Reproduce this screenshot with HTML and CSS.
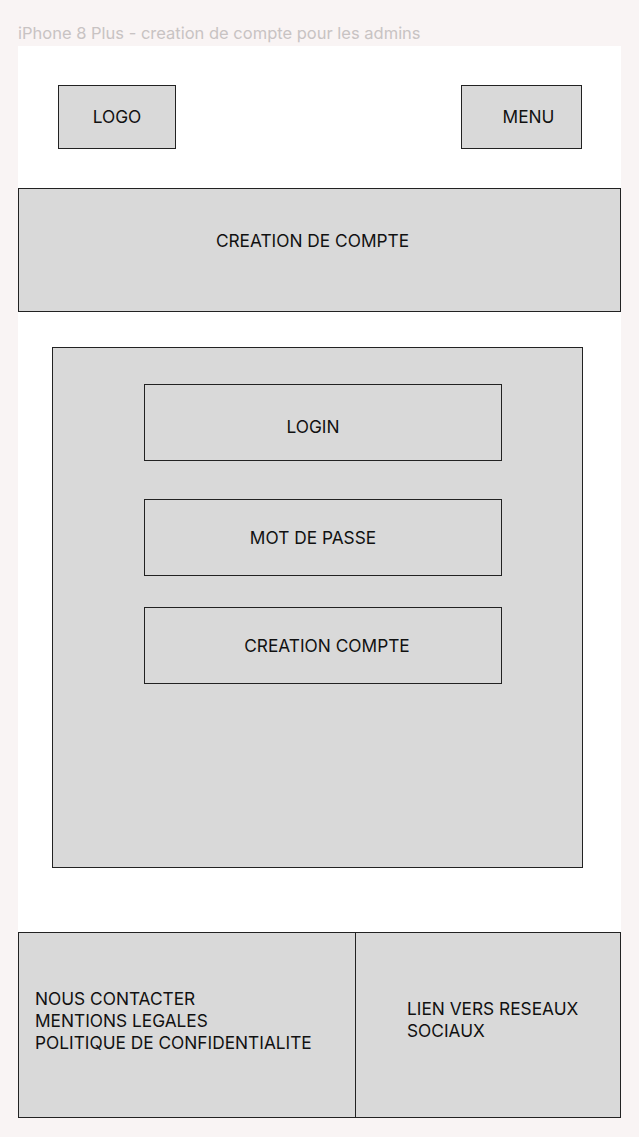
FILE: index.html
```html
<!DOCTYPE html>
<html lang="fr">
<head>
    <meta charset="UTF-8">
    <meta name="viewport" content="width=device-width, initial-scale=1.0">
    <title>creation de compte pour les admins</title>
    <link rel="stylesheet" href="styles.css">
</head>
<body>

    <div class="frame-label">iPhone 8 Plus - creation de compte pour les admins</div>

    <div class="frame">
        <div class="top-bar">
            <div class="box logo">LOGO</div>
            <div class="box menu">MENU</div>
        </div>

        <div class="box banner">CREATION DE COMPTE</div>

        <div class="box card">
            <div class="box field field-login">LOGIN</div>
            <div class="box field field-password">MOT DE PASSE</div>
            <div class="box field field-submit">CREATION COMPTE</div>
        </div>

        <div class="box footer">
            <div class="footer-links">
                NOUS CONTACTER<br>
                MENTIONS LEGALES<br>
                POLITIQUE DE CONFIDENTIALITE
            </div>
            <div class="footer-social">
                LIEN VERS RESEAUX<br>
                SOCIAUX
            </div>
        </div>
    </div>

</body>
</html>
```

FILE: styles.css
```css
body {
    margin: 0;
    padding: 0 18px;
    background-color: #f9f4f4;
    font-family: Inter, "Noto Sans", sans-serif;
    color: #111;
}

.frame-label {
    padding-top: 23px;
    margin-bottom: 3px;
    font-size: 16.5px;
    line-height: 20px;
    color: #c8c3c3;
}

.frame {
    width: 603px;
    height: 1072px;
    background-color: #fff;
    display: flex;
    flex-direction: column;
}

.box {
    box-sizing: border-box;
    background-color: #d9d9d9;
    border: 1px solid #222;
    font-size: 17.3px;
    line-height: 22px;
}

.top-bar {
    display: flex;
    justify-content: space-between;
    padding: 39px 39px 0 40px;
}

    .top-bar .box {
        height: 64px;
        display: flex;
        align-items: center;
        justify-content: center;
    }

    .top-bar .logo {
        width: 118px;
    }

    .top-bar .menu {
        width: 121px;
        padding-left: 14px;
    }

.banner {
    margin-top: 39px;
    height: 124px;
    padding-top: 41px;
    padding-right: 14px;
    text-align: center;
}

.card {
    margin: 35px 0 0 34px;
    width: 531px;
    height: 521px;
    padding: 36px 0 0 91px;
}

.field {
    width: 358px;
    height: 77px;
    display: flex;
    align-items: center;
    justify-content: center;
    padding-right: 20px;
}

    .field + .field {
        margin-top: 38px;
    }

    .field.field-login {
        padding-top: 8px;
    }

    .field.field-submit {
        margin-top: 31px;
        padding-right: 0;
        padding-left: 8px;
    }

.footer {
    margin-top: auto;
    height: 186px;
    display: flex;
}

.footer-links {
    box-sizing: border-box;
    width: 337px;
    border-right: 1px solid #222;
    padding: 55px 0 0 16px;
}

.footer-social {
    padding: 65px 0 0 51px;
}
```
